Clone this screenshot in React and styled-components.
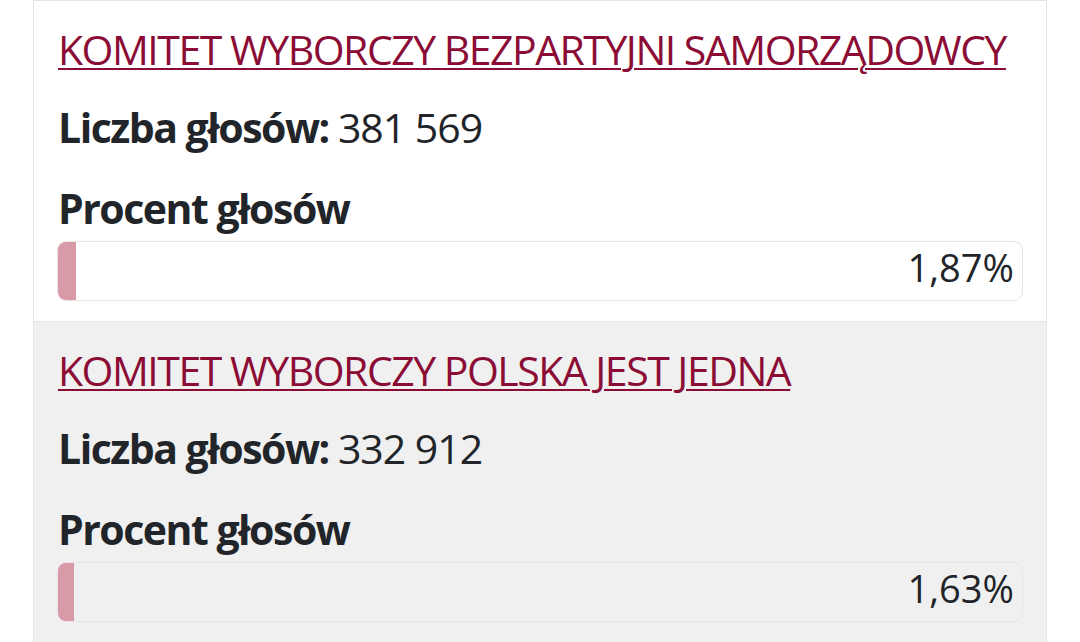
import React from "react";
import styled, { createGlobalStyle } from "styled-components";

const GlobalStyle = createGlobalStyle`
  html, body {
    margin: 0;
    padding: 0;
    background: #ffffff;
  }
  body {
    font-family: "Open Sans", "Noto Sans", "Liberation Sans", sans-serif;
    color: #212529;
  }
`;

const Card = styled.div`
  margin-left: 33px;
  width: 1014px;
  box-sizing: border-box;
  border: 1px solid #e4e4e4;
`;

const Entry = styled.section`
  padding: 18px 23px 20px 23px;
  background: ${(p) => (p.$shaded ? "#f0f0f0" : "#ffffff")};
  & + & {
    border-top: 1px solid #e4e4e4;
  }
`;

const CommitteeLink = styled.a`
  display: block;
  font-size: 41px;
  line-height: 60px;
  letter-spacing: -1.5px;
  font-weight: 400;
  color: #8b0d35;
  text-decoration: underline;
  text-decoration-thickness: 2px;
  text-underline-offset: 3px;
  white-space: nowrap;
  padding-left: 1px;
`;

const StatLine = styled.div`
  margin-top: ${(p) => p.$gap}px;
  font-size: 41px;
  line-height: 60px;
  letter-spacing: -1.5px;
  padding-left: 1px;
  white-space: nowrap;
`;

const Label = styled.span`
  font-weight: 700;
`;

const Value = styled.span`
  font-weight: 400;
  letter-spacing: -1px;
`;

const Bar = styled.div`
  position: relative;
  margin-top: 3px;
  height: 60px;
  box-sizing: border-box;
  border: 1px solid #ebe2e4;
  border-radius: 9px;
  overflow: hidden;
  background: ${(p) => (p.$shaded ? "transparent" : "#ffffff")};
`;

const Fill = styled.div`
  position: absolute;
  left: 0;
  top: 0;
  bottom: 0;
  background: #d99aa8;
`;

const Percent = styled.div`
  position: relative;
  text-align: right;
  padding-right: 8px;
  font-size: 38px;
  line-height: 50px;
  font-weight: 400;
`;

const results = [
  { name: "KOMITET WYBORCZY BEZPARTYJNI SAMORZĄDOWCY", votes: "381 569", pct: 1.87 },
  { name: "KOMITET WYBORCZY POLSKA JEST JEDNA", votes: "332 912", pct: 1.63 },
];

const fmt = (v) => v.toFixed(2).replace(".", ",") + "%";

export default function App() {
  return (
    <>
      <GlobalStyle />
      <Card>
        {results.map((r, i) => (
          <Entry key={r.name} $shaded={i % 2 === 1}>
            <CommitteeLink href="#">{r.name}</CommitteeLink>
            <StatLine $gap={18}>
              <Label>Liczba głosów:</Label> <Value>{r.votes}</Value>
            </StatLine>
            <StatLine $gap={21}>
              <Label>Procent głosów</Label>
            </StatLine>
            <Bar $shaded={i % 2 === 1}>
              <Fill style={{ width: `${r.pct}%` }} />
              <Percent>{fmt(r.pct)}</Percent>
            </Bar>
          </Entry>
        ))}
      </Card>
    </>
  );
}
